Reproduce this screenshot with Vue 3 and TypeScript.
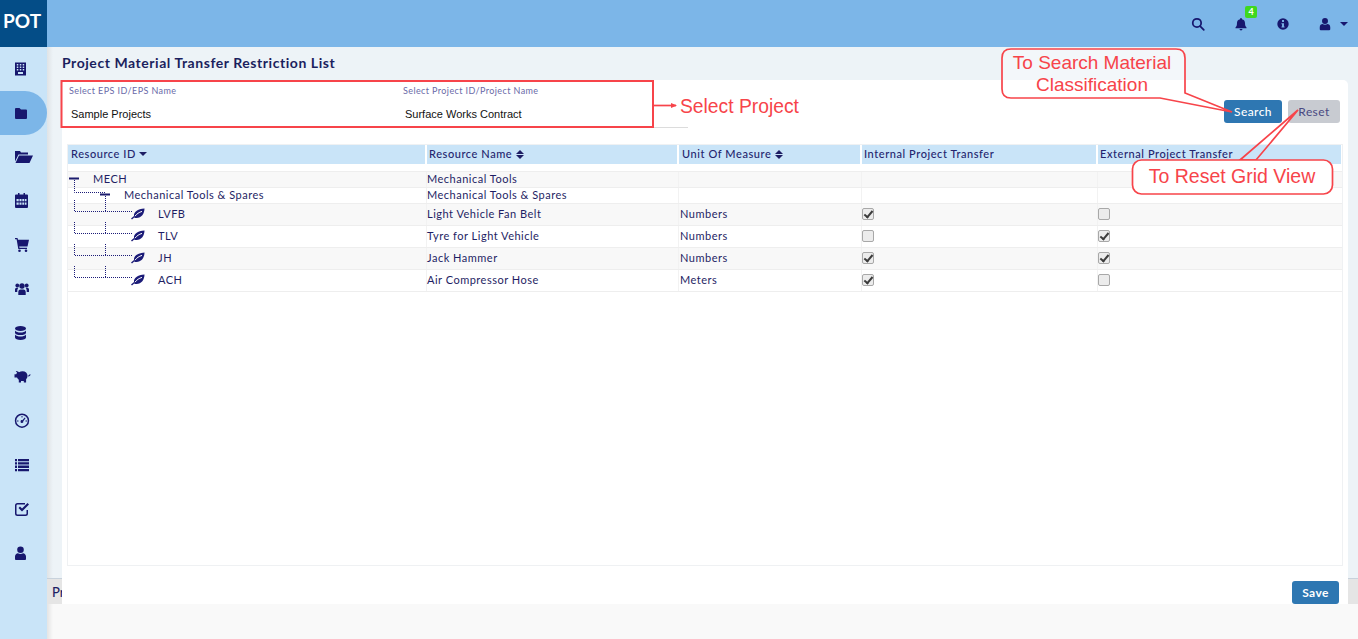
<template>
  <div class="app">
    <aside class="sidebar">
      <div class="logo">POT</div>
      <nav class="nav">
        <a v-for="(item, i) in navItems" :key="i" class="nav-item" :class="{ active: i === 1 }">
          <svg class="nav-icon" viewBox="1 0 16 16" fill="currentColor" v-html="item"></svg>
        </a>
      </nav>
    </aside>

    <div class="main">
      <header class="topbar">
        <svg class="top-icon search" viewBox="0 0 16 16" fill="none" stroke="currentColor" stroke-width="2">
          <circle cx="6.8" cy="6.8" r="4.8" />
          <path d="M10.4 10.4L14.6 14.6" stroke-linecap="round" />
        </svg>
        <span class="bell">
          <svg class="top-icon" viewBox="0 0 16 16" fill="currentColor">
            <path d="M8 1a1 1 0 0 1 1 1v.6c2.4.4 3.6 2.2 3.6 4.6 0 3 .8 3.9 1.7 4.8v.8H1.700v-.8c.9-.9 1.700-1.800 1.700-4.800 0-2.400 1.200-4.200 3.600-4.600V2a1 1 0 0 1 1-1zM6.300 13.800h3.400a1.700 1.700 0 0 1-3.400 0z" />
          </svg>
          <span class="badge">4</span>
        </span>
        <svg class="top-icon" viewBox="0 0 16 16" fill="currentColor">
          <path fill-rule="evenodd" d="M8 1.500a6.500 6.500 0 1 1 0 13 6.500 6.500 0 0 1 0-13zM6.900 3.500v2.200h2.200V3.500zM6.200 7v1.300h.7v2.500h-.7v1.300h3.600v-1.300h-.7V7z" />
        </svg>
        <span class="user">
          <svg class="top-icon" viewBox="0 0 16 16" fill="currentColor">
            <circle cx="8" cy="4.600" r="3.400" />
            <path d="M2 14v-2.400C2 9.400 3.600 8 5.200 8c.8.500 1.700.8 2.800.8s2-.3 2.800-.8c1.600 0 3.200 1.400 3.200 3.600V14c0 .6-.5 1-1 1H3c-.5 0-1-.4-1-1z" />
          </svg>
          <i class="caret"></i>
        </span>
      </header>

      <div class="content">
        <div class="strip">Project</div>
        <h1 class="title">Project Material Transfer Restriction List</h1>

        <section class="card">
          <div class="filters">
            <div class="field eps">
              <label>Select EPS ID/EPS Name</label>
              <span>Sample Projects</span>
            </div>
            <div class="field project">
              <label>Select Project ID/Project Name</label>
              <span>Surface Works Contract</span>
            </div>
            <div class="actions">
              <button class="btn primary">Search</button>
              <button class="btn muted">Reset</button>
            </div>
          </div>

          <div class="grid-box">
            <table class="grid">
              <colgroup>
                <col v-for="w in colWidths" :key="w" :style="{ width: w + 'px' }" />
              </colgroup>
              <thead>
                <tr>
                  <th v-for="col in columns" :key="col.label">
                    {{ col.label }}
                    <i v-if="col.sort === 'down'" class="sort-down"></i>
                    <span v-if="col.sort === 'both'" class="sort-both"><i></i><i></i></span>
                  </th>
                </tr>
              </thead>
              <tbody>
                <tr class="spacer"><td colspan="5"></td></tr>
                <tr v-for="row in rows" :key="row.id" :class="[row.kind, { odd: row.odd }]">
                  <td class="tree-cell" :style="{ paddingLeft: row.indent + 'px' }">{{ row.id }}</td>
                  <td>{{ row.name }}</td>
                  <td>{{ row.unit }}</td>
                  <td><span v-if="row.kind === 'leaf'" class="check" :class="{ on: row.internal }"></span></td>
                  <td><span v-if="row.kind === 'leaf'" class="check" :class="{ on: row.external }"></span></td>
                </tr>
              </tbody>
            </table>

            <svg class="tree-lines" width="90" height="150" viewBox="67 144 90 150" fill="none">
              <g stroke="#1c1c78" stroke-width="1" stroke-dasharray="1 1">
                <path d="M74.500 179V191.500H105" />
                <path d="M74.500 199V210.500H133M105.500 193V210" />
                <path d="M74.500 221V232.500H133M105.500 221V232" />
                <path d="M74.500 243V254.500H133M105.500 243V254" />
                <path d="M74.500 265V276.500H133M105.500 265V276" />
              </g>
              <path d="M69 177.500H79M100 193.500H110" stroke="#1c1c6e" stroke-width="2" />
              <g v-for="y in leafRows" :key="y" :transform="`translate(131 ${y})`">
                <path d="M0 10.500L3 8C2.500 4 6.500 1 13.500 0.500 13.500 5.500 10.500 10 5.500 10 4.500 10 3.800 9.800 3.200 9.400L1 11.500z" fill="#1c1c78" />
                <path d="M4 8.200C5.800 5.800 8 4.300 11 3.400" stroke="#fff" stroke-width="1" />
              </g>
            </svg>
          </div>

          <div class="card-foot">
            <button class="btn primary save">Save</button>
          </div>
        </section>
      </div>
      <div class="page-end"></div>
    </div>

    <!-- tutorial callouts drawn on top of the screenshot -->
    <svg class="callouts" width="1358" height="639" viewBox="0 0 1358 639" fill="none">
      <g stroke="#f7444a" stroke-width="1.700">
        <rect x="61.500" y="81" width="591.500" height="46" stroke-width="2" />
        <path d="M653 105.500H676" />
        <path d="M1011 49H1176Q1185 49 1185 58V93L1232 112 1160 98H1011Q1002 98 1002 89V58Q1002 49 1011 49Z" fill="#fff" fill-opacity="0.35" />
        <path d="M1298 110L1240 160H1256L1298 110Z" />
        <rect x="1132.500" y="160" width="200" height="34" rx="9" fill="#fff" />
      </g>
      <path d="M671 103L677 105.500 671 108Z" fill="#f7444a" />
      <g fill="#f7444a" font-family="'Liberation Sans', Arial, sans-serif">
        <text x="680" y="113" font-size="19.300">Select Project</text>
        <text x="1092" y="69" text-anchor="middle" font-size="19">To Search Material</text>
        <text x="1092" y="91" text-anchor="middle" font-size="19">Classification</text>
        <text x="1232" y="183" text-anchor="middle" font-size="19.500">To Reset Grid View</text>
      </g>
    </svg>
  </div>
</template>

<script setup lang="ts">
interface Column {
  label: string;
  sort?: 'down' | 'both';
}

interface Row {
  id: string;
  name: string;
  unit: string;
  kind: 'group' | 'leaf';
  indent: number;
  odd?: boolean;
  internal?: boolean;
  external?: boolean;
}

const navItems: string[] = [
  '<path fill-rule="evenodd" d="M1 1.500h11v13H1zM2.800 3v1.500h1.500V3zM5.800 3v1.500h1.500V3zM8.700 3v1.500h1.500V3zM2.800 5.500V7h1.500V5.500zM5.800 5.500V7h1.500V5.500zM8.700 5.500V7h1.500V5.500zM2.800 8v1.500h1.500V8zM5.800 8v1.500h1.500V8zM8.700 8v1.500h1.500V8zM4 11v2h5v-2z"/>',
  '<path d="M1 4a1 1 0 0 1 1-1h3.500L7 4.500h5a1 1 0 0 1 1 1V13a1 1 0 0 1-1 1H2a1 1 0 0 1-1-1z"/>',
  '<path d="M1 2h5l1 1.500h7v2H4.500L1 12.500zM5 6.500H19L15.500 14H1.500z"/>',
  '<path fill-rule="evenodd" d="M4 0h1.500v1.500h4V0H11v1.500h2a1 1 0 0 1 1 1V14a1 1 0 0 1-1 1H2a1 1 0 0 1-1-1V2.500a1 1 0 0 1 1-1h2zM2.500 6v2.200h2.200V6zM5.500 6v2.200h2V6zM8.300 6v2.200h2V6zM11 6v2.200h1.500V6zM2.500 9.500v2.200h2.200V9.500zM5.500 9.500v2.200h2V9.500zM8.300 9.500v2.200h2V9.500zM11 9.500v2.200h1.500V9.500z"/>',
  '<path d="M1 1h2.500l.5 1.800h11L13.500 9.500H5.200l.3 1.200H13V12H4.300L2.600 2.300H1z"/><circle cx="5.500" cy="13.700" r="1.300"/><circle cx="12" cy="13.700" r="1.300"/>',
  '<circle cx="8" cy="5" r="2.700"/><circle cx="3.300" cy="4.500" r="1.900"/><circle cx="12.700" cy="4.500" r="1.900"/><path d="M4.300 14v-3C4.300 9.300 5.500 8.500 6.500 8.500h3c1 0 2.200.8 2.200 2.500v3zM1 11V8.500c0-1 .8-1.700 1.500-1.700h2c-.6.700-1.200 1.500-1.200 3V11zM15 11V8.500c0-1-.8-1.700-1.500-1.700h-2c.6.700 1.200 1.500 1.200 3V11z"/>',
  '<ellipse cx="6.500" cy="3.500" rx="5.500" ry="2.500"/><path d="M1 5.500c1 1.500 3.200 2.100 5.500 2.100S11 7 12 5.500v2.200c0 1.400-2.500 2.300-5.500 2.300S1 9.100 1 7.700zM1 9.500c1 1.500 3.200 2.100 5.500 2.100S11 11 12 9.500v3c0 1.400-2.500 2.500-5.500 2.500S1 13.900 1 12.500z"/>',
  '<path d="M1.800 2c1.400 0 2.600.6 3.200 1.300C6 2.700 7.200 2.300 8.500 2.300c3 0 5 1.800 5 4.500 0 1.500-.5 2.600-1.400 3.400v3.300H9.800v-1.500H7v1.500H4.800v-2.800C4 10 3.400 9.300 3 8.500H0.500V5.300h1.700c.2-.6.500-1.100.9-1.500zM14 6.500c1 0 1.500-.5 1.500-1.300h1c0 1.300-1 2.300-2.500 2.300z"/>',
  '<path fill-rule="evenodd" d="M8 0.500a7.200 7.200 0 1 1 0 14.400A7.200 7.200 0 0 1 8 .5zm0 1.500a5.700 5.700 0 1 0 0 11.400A5.700 5.700 0 0 0 8 2zM7.500 3h1v1.500h-1zM3 7.500h1.500v1H3zM11.500 7.500H13v1h-1.500zM10.800 4.500l.7.700-2.200 3a1.400 1.400 0 1 1-1-1z"/>',
  '<path d="M1 2h2v2.300H1zM4 2h11v2.300H4zM1 5.300h2v2.300H1zM4 5.300h11v2.300H4zM1 8.600h2v2.300H1zM4 8.600h11v2.300H4zM1 11.900h2v2.300H1zM4 11.900h11v2.300H4z"/>',
  '<path d="M3.500 2H11v1.500H3.500a1 1 0 0 0-1 1v8a1 1 0 0 0 1 1h8a1 1 0 0 0 1-1V9H14v3.500a2.500 2.500 0 0 1-2.500 2.500h-8A2.500 2.500 0 0 1 1 12.500v-8A2.500 2.500 0 0 1 3.500 2z"/><path d="M4.500 7l1.500-1.500 2 2L13.500 2 15 3.500l-7 7z"/>',
  '<circle cx="6.500" cy="4.800" r="3.300"/><path d="M1 14v-2.500C1 9.500 2.500 8.200 3.900 8.200c.8.500 1.600.7 2.600.7s1.800-.2 2.600-.7c1.400 0 2.900 1.300 2.900 3.300V14c0 .5-.5 1-1 1h-9c-.5 0-1-.5-1-1z"/>',
];

const colWidths = [358, 252, 183, 236, 245];

const columns: Column[] = [
  { label: 'Resource ID', sort: 'down' },
  { label: 'Resource Name', sort: 'both' },
  { label: 'Unit Of Measure', sort: 'both' },
  { label: 'Internal Project Transfer' },
  { label: 'External Project Transfer' },
];

const rows: Row[] = [
  { id: 'MECH', name: 'Mechanical Tools', unit: '', kind: 'group', indent: 25, odd: true },
  { id: 'Mechanical Tools & Spares', name: 'Mechanical Tools & Spares', unit: '', kind: 'group', indent: 56 },
  { id: 'LVFB', name: 'Light Vehicle Fan Belt', unit: 'Numbers', kind: 'leaf', indent: 90, odd: true, internal: true },
  { id: 'TLV', name: 'Tyre for Light Vehicle', unit: 'Numbers', kind: 'leaf', indent: 90, external: true },
  { id: 'JH', name: 'Jack Hammer', unit: 'Numbers', kind: 'leaf', indent: 90, odd: true, internal: true, external: true },
  { id: 'ACH', name: 'Air Compressor Hose', unit: 'Meters', kind: 'leaf', indent: 90, internal: true },
];

const leafRows = [207, 229, 251, 273];
</script>

<style>
html,
body {
  margin: 0;
  height: 100%;
  overflow: hidden;
}
</style>

<style scoped>
.app {
  position: relative;
  display: flex;
  width: 1358px;
  height: 639px;
  overflow: hidden;
  font-family: Lato, "Liberation Sans", sans-serif;
  color: #1e1e64;
}

.sidebar {
  width: 47px;
  flex: none;
  background: #c9e4f8;
  display: flex;
  flex-direction: column;
  z-index: 2;
}

.logo {
  height: 47px;
  background: #044d87;
  color: #fff;
  font-weight: 700;
  font-size: 19px;
  line-height: 41px;
  padding-left: 3px;
}

.nav {
  display: flex;
  flex-direction: column;
}

.nav-item {
  height: 44px;
  display: flex;
  align-items: center;
  padding-left: 15px;
  color: #17176e;
}

.nav-item.active {
  background: #7cb6e8;
  border-radius: 0 22px 22px 0;
}

.nav-icon {
  width: 16px;
  height: 16px;
  margin-top: -1px;
  overflow: visible;
}

.main {
  flex: 1;
  display: flex;
  flex-direction: column;
  min-width: 0;
}

.topbar {
  height: 47px;
  flex: none;
  background: #7cb6e8;
  color: #17176e;
  display: flex;
  align-items: center;
  justify-content: flex-end;
  gap: 28px;
  padding-right: 10px;
}

.top-icon {
  width: 14px;
  height: 14px;
  display: block;
}

.top-icon.search {
  margin-right: 1px;
}

.bell {
  position: relative;
}

.badge {
  position: absolute;
  top: -11px;
  left: 11px;
  width: 12px;
  height: 12px;
  border-radius: 2px;
  background: #3fd81e;
  color: #fff;
  font-size: 9px;
  font-weight: 700;
  line-height: 12px;
  text-align: center;
}

.user {
  display: flex;
  align-items: center;
  gap: 8px;
}

.caret {
  border: 4px solid transparent;
  border-top-color: #17176e;
  border-bottom-width: 0;
}

.content {
  position: relative;
  height: 557px;
  flex: none;
  background: linear-gradient(90deg, #dfe3e6 0, #edf3f7 6px);
  padding: 0 10px 0 15px;
  box-sizing: border-box;
  display: flex;
  flex-direction: column;
}

.strip {
  position: absolute;
  left: 0;
  right: 0;
  bottom: 0;
  height: 26px;
  padding-left: 5px;
  background: #e5e5e5;
  border-top: 1px solid #c8d2dc;
  box-sizing: border-box;
  font-size: 13px;
  font-weight: 500;
  line-height: 26px;
}

.title {
  margin: 0;
  height: 33px;
  font-size: 14px;
  font-weight: 700;
  letter-spacing: 0.55px;
  line-height: 32px;
  color: #1b1f5e;
}

.card {
  position: relative;
  flex: 1;
  background: #fff;
  border-radius: 5px 5px 0 0;
  display: flex;
  flex-direction: column;
  padding: 0 5px;
}

.filters {
  height: 64px;
  flex: none;
  position: relative;
  display: flex;
}

.field {
  width: 334px;
  padding: 5px 0 0 2px;
  box-sizing: border-box;
  display: flex;
  flex-direction: column;
}

.field.project {
  width: 287px;
  border-bottom: 1px solid #dcdcdc;
  height: 48px;
}

.field label {
  font-size: 9px;
  letter-spacing: 0.4px;
  color: #6a6aa8;
  line-height: 11px;
}

.field span {
  margin: 11px 0 0 2px;
  font-family: "Liberation Sans", Arial, sans-serif;
  font-size: 11px;
  line-height: 14px;
  color: #111;
}

.actions {
  margin-left: auto;
  padding: 20px 3px 0 0;
  display: flex;
  gap: 6px;
  align-items: flex-start;
}

.btn {
  height: 23px;
  border: 0;
  border-radius: 3px;
  font-family: inherit;
  font-size: 12px;
  font-weight: 500;
  letter-spacing: 0.4px;
  padding: 0;
}

.btn.primary {
  width: 58px;
  background: #2e77b2;
  color: #fff;
}

.btn.muted {
  width: 52px;
  background: #c8cbd1;
  color: #4a4a82;
  font-weight: 400;
}

.grid-box {
  position: relative;
  flex: none;
  height: 422px;
  border: 1px solid #eff1f3;
  box-sizing: border-box;
  overflow: hidden;
}

.grid {
  width: 1274px;
  table-layout: fixed;
  border-collapse: collapse;
  font-size: 11px;
  letter-spacing: 0.5px;
}

.grid th {
  height: 19px;
  padding: 0 2px;
  background: #c9e4f8;
  border-right: 2px solid #fff;
  text-align: left;
  vertical-align: top;
  font-weight: 500;
  white-space: nowrap;
  letter-spacing: 0.57px;
  color: #24246e;
  line-height: 17px;
}

.grid th:first-child {
  padding-left: 3px;
}

.grid th:nth-child(3) {
  padding-left: 3px;
}

.sort-down {
  display: inline-block;
  border: 4px solid transparent;
  border-top-color: #1e1e64;
  border-bottom-width: 0;
  vertical-align: 2px;
}

.sort-both {
  display: inline-block;
  width: 8px;
  height: 9px;
  vertical-align: -1px;
}

.sort-both i {
  display: block;
  width: 0;
  border: 4px solid transparent;
  border-bottom-color: #1e1e64;
  border-top-width: 0;
  margin-bottom: 1px;
}

.sort-both i:last-child {
  border-top: 4px solid #1e1e64;
  border-bottom-width: 0;
  margin-bottom: 0;
}

.spacer td {
  height: 5px;
  padding: 0;
}

.grid td {
  padding: 0 0.5px 2px;
  border-bottom: 1px solid #eeeeee;
  border-right: 1px solid #f2f2f2;
  white-space: nowrap;
}

.grid td:nth-child(3) {
  padding-left: 1.5px;
}

.group td {
  height: 13px;
}

.leaf td {
  height: 19px;
}

.odd td {
  background: #f8f8f8;
}

.check {
  display: block;
  width: 12px;
  height: 12px;
  border: 1px solid #a8a8a8;
  border-radius: 2px;
  background: #ececec;
  box-sizing: border-box;
  position: relative;
}

.check.on::after {
  content: "";
  position: absolute;
  left: 3px;
  top: 0;
  width: 3px;
  height: 7px;
  border: solid #3c3c3c;
  border-width: 0 2px 2px 0;
  transform: rotate(40deg);
}

.tree-lines {
  position: absolute;
  left: -1px;
  top: 0;
  pointer-events: none;
}

.card-foot {
  flex: 1;
  display: flex;
  justify-content: flex-end;
  align-items: flex-end;
  padding-right: 4px;
}

.save {
  width: 47px !important;
  font-weight: 700;
}

.page-end {
  flex: 1;
  background: linear-gradient(90deg, #e4e4e4 0, #f9f9f9 6px);
}

.callouts {
  position: absolute;
  left: 0;
  top: 0;
  pointer-events: none;
  z-index: 3;
}
</style>
